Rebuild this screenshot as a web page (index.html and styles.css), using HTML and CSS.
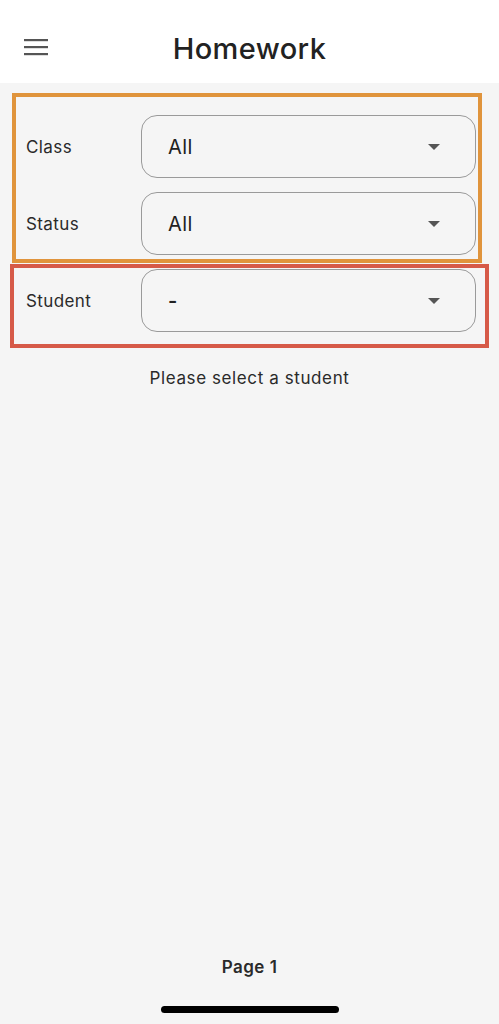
FILE: index.html
```html
<!DOCTYPE html>
<html lang="en">
<head>
  <meta charset="UTF-8">
  <title>Homework</title>
  <link rel="stylesheet" href="styles.css">
</head>
<body>
  <header class="topbar">
    <button class="menu-btn" aria-label="Menu">
      <svg width="24" height="18" viewBox="0 0 24 18">
        <rect x="0" y="1" width="24" height="2.2" fill="#555"/>
        <rect x="0" y="8" width="24" height="2.2" fill="#555"/>
        <rect x="0" y="15" width="24" height="2.2" fill="#555"/>
      </svg>
    </button>
    <h1 class="title">Homework</h1>
  </header>

  <main class="content">
    <section class="filters">
      <div class="filter-row">
        <span class="filter-label">Class</span>
        <div class="select"><span>All</span><i class="caret"></i></div>
      </div>
      <div class="filter-row">
        <span class="filter-label">Status</span>
        <div class="select"><span>All</span><i class="caret"></i></div>
      </div>
      <div class="filter-row">
        <span class="filter-label">Student</span>
        <div class="select"><span class="dash">-</span><i class="caret"></i></div>
      </div>

      <!-- annotation boxes -->
      <div class="mark mark-orange"></div>
      <div class="mark mark-red"></div>
    </section>

    <p class="empty">Please select a student</p>

    <div class="spacer"></div>

    <footer class="pager">Page 1</footer>
    <div class="home-bar"></div>
  </main>
</body>
</html>
```

FILE: styles.css
```css
* { box-sizing: border-box; }

html, body { height: 100%; }

body {
  margin: 0;
  background: #f5f5f5;
  font-family: Inter, "Noto Sans", sans-serif;
  color: #222;
  display: flex;
  flex-direction: column;
}

.topbar {
  height: 83px;
  background: #fff;
  display: flex;
  align-items: center;
  justify-content: center;
  position: relative;
  padding-top: 14px;
}

.menu-btn {
  position: absolute;
  left: 24px;
  top: 38px;
  border: 0;
  padding: 0;
  background: none;
  line-height: 0;
}

.title {
  margin: 0;
  font-size: 29px;
  font-weight: 500;
  color: #222;
  letter-spacing: 0.4px;
}

.content {
  flex: 1;
  display: flex;
  flex-direction: column;
}

.filters {
  position: relative;
  display: flex;
  flex-direction: column;
  gap: 14px;
  padding: 32px 23px 0 26px;
}

.filter-row {
  display: flex;
  align-items: center;
}

.filter-label {
  width: 115px;
  font-size: 17px;
  letter-spacing: 0.4px;
  color: #2a2a2a;
}

.select {
  flex: 1;
  height: 63px;
  border: 1px solid #9a9a9a;
  border-radius: 16px;
  display: flex;
  align-items: center;
  justify-content: space-between;
  padding: 0 35px 0 26px;
  font-size: 20px;
  letter-spacing: 0.4px;
  color: #222;
}

.dash { font-weight: 600; }

.caret {
  width: 0;
  height: 0;
  border-left: 6px solid transparent;
  border-right: 6px solid transparent;
  border-top: 6px solid #555;
}

.mark {
  position: absolute;
  pointer-events: none;
  border: 4px solid;
}

.mark-orange {
  left: 12px;
  top: 10px;
  width: 470px;
  height: 170px;
  border-color: #e0943c;
}

.mark-red {
  left: 10px;
  top: 181px;
  width: 479px;
  height: 84px;
  border-color: #d65a48;
}

.empty {
  margin: 36px 0 0;
  text-align: center;
  font-size: 17px;
  letter-spacing: 0.6px;
  color: #2a2a2a;
}

.spacer { flex: 1; }

.pager {
  text-align: center;
  font-size: 17px;
  font-weight: 600;
  letter-spacing: 0.5px;
  color: #2a2a2a;
  margin-bottom: 29px;
}

.home-bar {
  width: 178px;
  height: 7px;
  border-radius: 4px;
  background: #000;
  margin: 0 auto 11px;
}
```
